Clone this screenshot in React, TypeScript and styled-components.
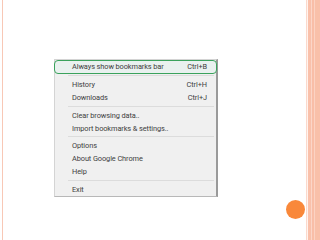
import React from "react";
import styled, { createGlobalStyle } from "styled-components";

const Global = createGlobalStyle`
  html, body { margin: 0; padding: 0; background: #ffffff; }
  body { width: 320px; height: 240px; overflow: hidden; }
`;

const Slide = styled.div`
  width: 320px;
  height: 240px;
  display: flex;
  background: #ffffff;
`;

const LeftEdge = styled.div`
  width: 4px;
  flex: none;
  box-sizing: border-box;
  border-left: 2px solid #ffffff;
  border-right: 1px solid #ffffff;
  background: #f8c8b6;
`;

const Main = styled.div`
  flex: 1;
  display: grid;
  grid-template-columns: 50px 164px 1fr;
  grid-template-rows: 59px 138px 1fr;
`;

const RightStripes = styled.div`
  width: 14px;
  flex: none;
  background: linear-gradient(
    to right,
    #fbd9cc 0px,
    #fbd9cc 1px,
    #fff3ee 1px,
    #fff3ee 2px,
    #f9c1ab 2px,
    #f9c1ab 5px,
    #fcd6c8 5px,
    #fcd6c8 6px,
    #f9bea7 6px,
    #f9bea7 8px,
    #fcd3c3 8px,
    #fcd3c3 9px,
    #f9c0a9 9px,
    #f9c0a9 14px
  );
`;

const Menu = styled.div`
  grid-column: 2;
  grid-row: 2;
  box-sizing: border-box;
  background: #f0f0f0;
  border: 1px solid #d4d4d4;
  border-right: 2px solid #9a9a9a;
  border-bottom: 1px solid #b8b8b8;
  display: flex;
  flex-direction: column;
  font-family: Roboto, "Noto Sans", sans-serif;
  font-size: 7.4px;
  letter-spacing: -0.1px;
  color: #404040;
`;

const Row = styled.div<{ $highlight?: boolean }>`
  height: ${(p) => (p.$highlight ? "14px" : "13px")};
  box-sizing: border-box;
  display: flex;
  align-items: center;
  justify-content: space-between;
  padding: 0 9px 0 17px;
  margin: ${(p) => (p.$highlight ? "0 -1px 0 -1px" : "0")};
  border: ${(p) => (p.$highlight ? "1.5px solid #3aa25c" : "none")};
  border-radius: ${(p) => (p.$highlight ? "4px" : "0")};
  background: ${(p) => (p.$highlight ? "#e9f1ef" : "transparent")};
  white-space: nowrap;
`;

const Shortcut = styled.span`
  color: #404040;
`;

const Separator = styled.div<{ $h?: number }>`
  height: ${(p) => p.$h ?? 5}px;
  display: flex;
  align-items: center;
  padding: 0 2px 0 13px;
  &::after {
    content: "";
    flex: 1;
    height: 1px;
    background: #dcdcdc;
  }
`;

const Dot = styled.div`
  grid-column: 3;
  grid-row: 3;
  justify-self: end;
  align-self: start;
  margin: 3px 1px 0 0;
  width: 19px;
  height: 19px;
  border-radius: 50%;
  background: #f9883a;
`;

export default function App() {
  return (
    <>
      <Global />
      <Slide>
        <LeftEdge />
        <Main>
          <Menu>
            <Row $highlight>
              <span>Always show bookmarks bar</span>
              <Shortcut>Ctrl+B</Shortcut>
            </Row>
            <Separator $h={4} />
            <Row>
              <span>History</span>
              <Shortcut>Ctrl+H</Shortcut>
            </Row>
            <Row>
              <span>Downloads</span>
              <Shortcut>Ctrl+J</Shortcut>
            </Row>
            <Separator />
            <Row>
              <span>Clear browsing data..</span>
            </Row>
            <Row>
              <span>Import bookmarks &amp; settings..</span>
            </Row>
            <Separator />
            <Row>
              <span>Options</span>
            </Row>
            <Row>
              <span>About Google Chrome</span>
            </Row>
            <Row>
              <span>Help</span>
            </Row>
            <Separator />
            <Row>
              <span>Exit</span>
            </Row>
          </Menu>
          <Dot />
        </Main>
        <RightStripes />
      </Slide>
    </>
  );
}
